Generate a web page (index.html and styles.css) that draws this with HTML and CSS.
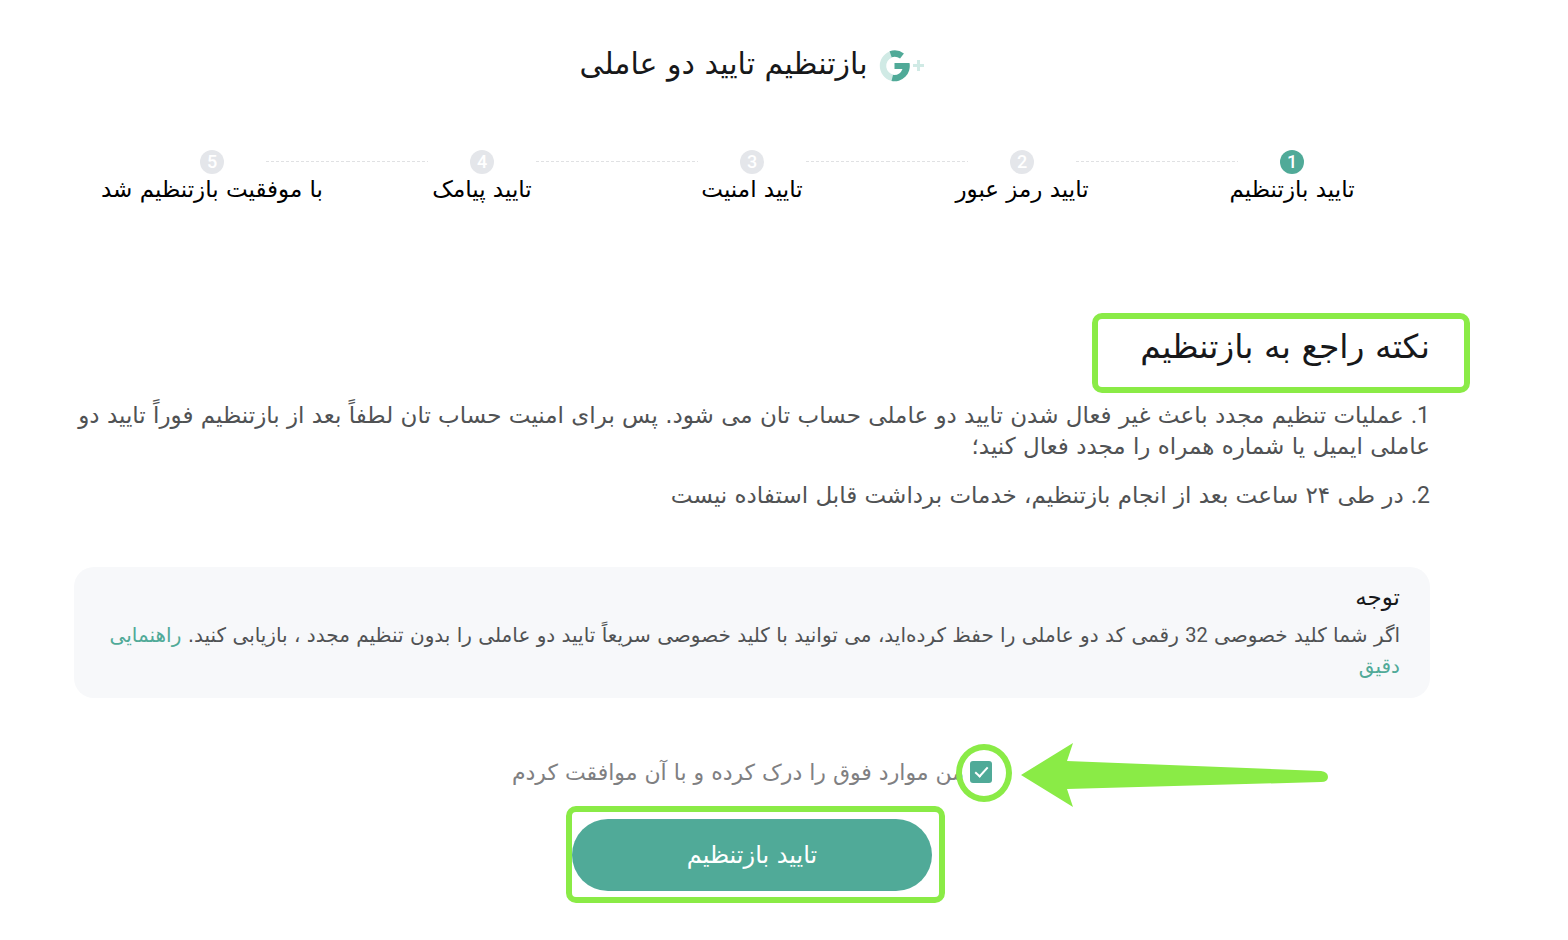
FILE: index.html
```html
<!DOCTYPE html>
<html lang="fa" dir="rtl">
<head>
  <meta charset="UTF-8">
  <meta name="viewport" content="width=device-width, initial-scale=1.0">
  <title>بازتنظیم تایید دو عاملی</title>
  <link rel="stylesheet" href="styles.css">
</head>
<body>
  <main class="page">
    <header class="page-header">
      <svg class="logo" viewBox="0 0 46 32" aria-hidden="true">
        <path d="M12 4.4A12.2 12.2 0 0 0 15 28" fill="none" stroke="#d0eae5" stroke-width="6.4"/>
        <path d="M11.6 4.2A12.2 12.2 0 0 1 23 6" fill="none" stroke="#50aa98" stroke-width="6.4"/>
        <path d="M15.5 13H30.5A15.3 15.3 0 0 1 12.5 31L14 25A9.3 9.3 0 0 0 23.5 19H15.5Z" fill="#50aa98"/>
        <path d="M39.5 10V21M34 15.5H45" fill="none" stroke="#d0eae5" stroke-width="3"/>
      </svg>
      <h1>بازتنظیم تایید دو عاملی</h1>
    </header>

    <ol class="steps">
      <li class="step active">
        <div class="step-head"><span class="number">1</span></div>
        <span class="step-label">تایید بازتنظیم</span>
      </li>
      <li class="step">
        <div class="step-head"><span class="number">2</span></div>
        <span class="step-label">تایید رمز عبور</span>
      </li>
      <li class="step">
        <div class="step-head"><span class="number">3</span></div>
        <span class="step-label">تایید امنیت</span>
      </li>
      <li class="step">
        <div class="step-head"><span class="number">4</span></div>
        <span class="step-label">تایید پیامک</span>
      </li>
      <li class="step">
        <div class="step-head"><span class="number">5</span></div>
        <span class="step-label">با موفقیت بازتنظیم شد</span>
      </li>
    </ol>

    <section class="tips">
      <h2 class="marked">نکته راجع به بازتنظیم</h2>
      <p><span class="digits">1.</span> عملیات تنظیم مجدد باعث غیر فعال شدن تایید دو عاملی حساب تان می شود. پس برای امنیت حساب تان لطفاً بعد از بازتنظیم فوراً تایید دو عاملی ایمیل یا شماره همراه را مجدد فعال کنید؛</p>
      <p><span class="digits">2.</span> در طی ۲۴ ساعت بعد از انجام بازتنظیم، خدمات برداشت قابل استفاده نیست</p>
    </section>

    <section class="notice">
      <h3>توجه</h3>
      <p>اگر شما کلید خصوصی <span class="digits">32</span> رقمی کد دو عاملی را حفظ کرده‌اید، می توانید با کلید خصوصی سریعاً تایید دو عاملی را بدون تنظیم مجدد ، بازیابی کنید. <a href="#">راهنمایی دقیق</a></p>
    </section>

    <form class="confirm">
      <div class="agree">
        <span class="check">
          <input type="checkbox" id="agree" checked>
          <svg class="arrow" viewBox="0 0 308 66" aria-hidden="true">
            <path d="M0 32L52 0L46 18L300 28Q307 29 307 34Q307 39 300 39L46 46L52 64Z" fill="#8aeb46"/>
          </svg>
        </span>
        <label for="agree">من موارد فوق را درک کرده و با آن موافقت کردم</label>
      </div>
      <div class="submit">
        <button type="button" class="btn">تایید بازتنظیم</button>
      </div>
    </form>
  </main>
</body>
</html>
```
FILE: styles.css
```css
*,
*::before,
*::after {
  box-sizing: border-box;
}

body {
  margin: 0;
  background-color: #fff;
  color: #17181a;
  font-family: 'DejaVu Sans', sans-serif;
}

h1, h2, h3, p {
  margin: 0;
  font-weight: 400;
}

.digits,
.number {
  font-family: Roboto, sans-serif;
}

.page {
  padding: 44px 138px 36px 74px;
}

.page-header {
  display: flex;
  justify-content: center;
  align-items: center;
  gap: 11px;
  height: 44px;
}

.page-header h1 {
  padding-bottom: 4px;
  font-size: 30px;
  line-height: 40px;
}

.logo {
  width: 46px;
  height: 32px;
}

/* steps */
.steps {
  display: flex;
  margin: 62px 0 0;
  padding: 0 3px;
  list-style: none;
}

.step {
  flex: 1 1 0;
  min-width: 0;
  text-align: center;
}

.step-head {
  display: flex;
  align-items: center;
  gap: 42px;
}

.step-head::before,
.step-head::after {
  content: "";
  flex: 1;
  height: 1px;
  margin-bottom: 2px;
  background: repeating-linear-gradient(to right, #e0e1e3 0 3px, transparent 3px 5px);
}

.step:first-child .step-head::before,
.step:last-child .step-head::after {
  visibility: hidden;
}

.number {
  width: 24px;
  height: 24px;
  border-radius: 50%;
  background-color: #e4e6ea;
  color: #fff;
  font-size: 18px;
  font-weight: 500;
  line-height: 23px;
}

.active .number {
  background-color: #50aa98;
}

.step-label {
  display: block;
  color: #000;
  font-size: 23px;
  line-height: 30px;
  white-space: nowrap;
}

/* tips */
.tips {
  margin-top: 120px;
  color: #505254;
}

.tips h2 {
  width: fit-content;
  margin-bottom: 30px;
  color: #17181a;
  font-size: 33px;
  line-height: 46px;
}

.tips p {
  margin-bottom: 18px;
  font-size: 23px;
  line-height: 31px;
}

.marked {
  position: relative;
}

.marked::after {
  content: "";
  position: absolute;
  top: -11px;
  right: -40px;
  width: 378px;
  height: 80px;
  border: 6px solid #8aeb46;
  border-radius: 10px;
}

/* notice */
.notice {
  margin-top: 56px;
  padding: 14px 30px 16px;
  border-radius: 20px;
  background-color: #f7f8fa;
}

.notice h3 {
  font-size: 23px;
  line-height: 32px;
}

.notice p {
  margin-top: 7px;
  color: #505254;
  font-size: 20px;
  line-height: 31px;
}

.notice a {
  color: #50aa98;
  text-decoration: none;
}

/* confirm */
.confirm {
  margin-top: 45px;
}

.agree {
  display: flex;
  justify-content: center;
  align-items: center;
  gap: 6px;
  height: 58px;
  color: #7f8082;
  font-size: 22px;
}

.check {
  position: relative;
  display: flex;
}

.check::after {
  content: "";
  position: absolute;
  top: -17px;
  right: -20px;
  width: 56px;
  height: 58px;
  border: 6px solid #8aeb46;
  border-radius: 50%;
  pointer-events: none;
}

.check input {
  appearance: none;
  width: 22px;
  height: 22px;
  margin: 0;
  border-radius: 3px;
  background-color: #50aa98;
}

.check input:checked::before {
  content: "";
  display: block;
  width: 7px;
  height: 13px;
  margin: 3px 7px 0 0;
  border: solid #fff;
  border-width: 0 2px 2px 0;
  transform: rotate(42deg);
}

.arrow {
  position: absolute;
  top: -18px;
  left: 51px;
  width: 308px;
  height: 66px;
}

.submit {
  position: relative;
  width: 360px;
  margin: 18px auto 0;
}

.submit::after {
  content: "";
  position: absolute;
  top: -13px;
  left: -6px;
  width: 379px;
  height: 97px;
  border: 6px solid #8aeb46;
  border-radius: 10px;
  pointer-events: none;
}

.btn {
  width: 100%;
  height: 72px;
  border: none;
  border-radius: 36px;
  background-color: #50aa98;
  color: #fff;
  font-family: inherit;
  font-size: 24px;
  cursor: pointer;
}
```
